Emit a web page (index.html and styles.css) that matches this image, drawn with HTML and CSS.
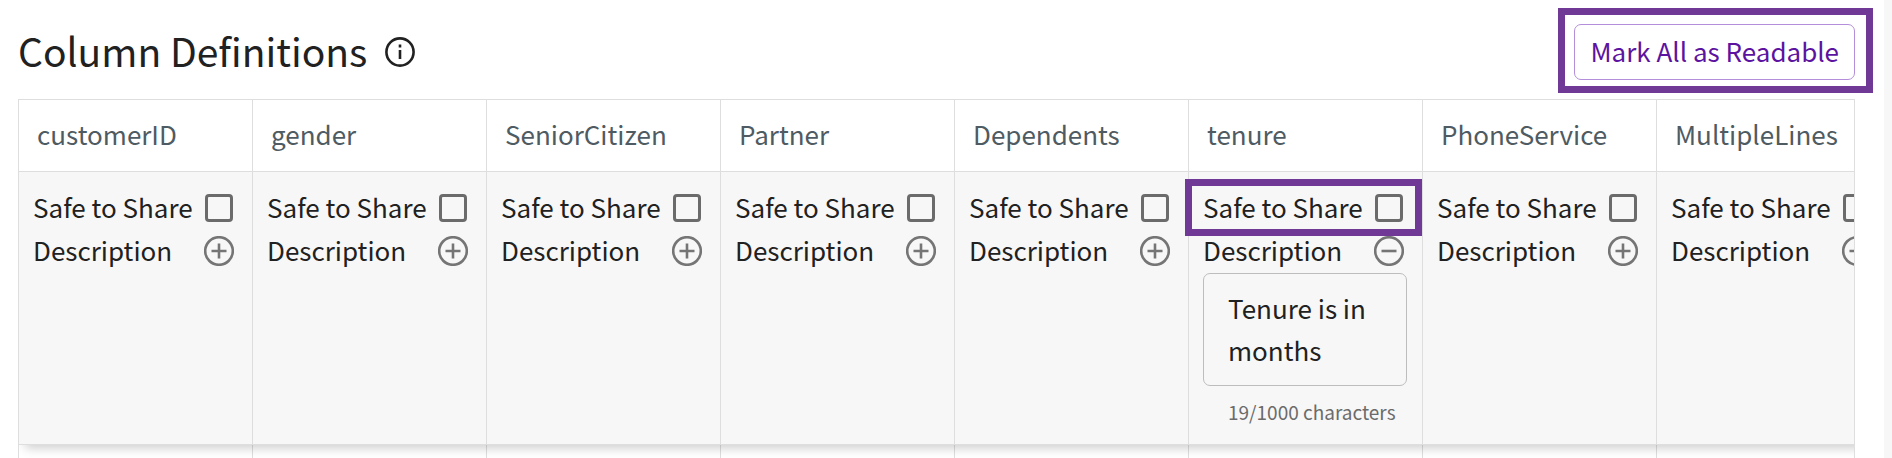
FILE: index.html
```html
<!DOCTYPE html>
<html lang="en">
<head>
    <meta charset="UTF-8">
    <meta name="viewport" content="width=device-width, initial-scale=1.0">
    <title>Column Definitions</title>
    <link rel="stylesheet" href="styles.css">
</head>
<body>
    <svg class="sprite" aria-hidden="true">
        <symbol id="icon-plus" viewBox="0 0 30 30">
            <circle cx="15" cy="15" r="13.8" />
            <path d="M15 7.5v15M7.5 15h15" />
        </symbol>
        <symbol id="icon-minus" viewBox="0 0 30 30">
            <circle cx="15" cy="15" r="13.8" />
            <path d="M7.5 15h15" />
        </symbol>
    </svg>

    <main class="page">
        <header class="toolbar">
            <h1>Column Definitions</h1>
            <button class="info" type="button" aria-label="About column definitions">
                <svg viewBox="0 0 30 30">
                    <circle cx="15" cy="15" r="13.6" />
                    <path d="M15 13v9M15 7.5v3" />
                </svg>
            </button>
            <div class="mark-all">
                <button class="mark-all-button" type="button">Mark All as Readable</button>
                <span class="highlight highlight-button"></span>
            </div>
        </header>

        <div class="table-scroll">
            <table>
                <thead>
                    <tr class="names">
                        <th>customerID</th>
                        <th>gender</th>
                        <th>SeniorCitizen</th>
                        <th>Partner</th>
                        <th>Dependents</th>
                        <th>tenure</th>
                        <th>PhoneService</th>
                        <th>MultipleLines</th>
                    </tr>
                    <tr class="settings">
                        <td>
                            <label class="row">Safe to Share <input type="checkbox"></label>
                            <div class="row">Description <button class="toggle" type="button" aria-label="Add description"><svg><use href="#icon-plus" /></svg></button></div>
                        </td>
                        <td>
                            <label class="row">Safe to Share <input type="checkbox"></label>
                            <div class="row">Description <button class="toggle" type="button" aria-label="Add description"><svg><use href="#icon-plus" /></svg></button></div>
                        </td>
                        <td>
                            <label class="row">Safe to Share <input type="checkbox"></label>
                            <div class="row">Description <button class="toggle" type="button" aria-label="Add description"><svg><use href="#icon-plus" /></svg></button></div>
                        </td>
                        <td>
                            <label class="row">Safe to Share <input type="checkbox"></label>
                            <div class="row">Description <button class="toggle" type="button" aria-label="Add description"><svg><use href="#icon-plus" /></svg></button></div>
                        </td>
                        <td>
                            <label class="row">Safe to Share <input type="checkbox"></label>
                            <div class="row">Description <button class="toggle" type="button" aria-label="Add description"><svg><use href="#icon-plus" /></svg></button></div>
                        </td>
                        <td>
                            <label class="row">Safe to Share <input type="checkbox"><span class="highlight highlight-row"></span></label>
                            <div class="row"><label for="tenure-description">Description</label> <button class="toggle" type="button" aria-label="Hide description"><svg><use href="#icon-minus" /></svg></button></div>
                            <textarea id="tenure-description" rows="2" maxlength="1000">Tenure is in months</textarea>
                            <div class="count">19/1000 characters</div>
                        </td>
                        <td>
                            <label class="row">Safe to Share <input type="checkbox"></label>
                            <div class="row">Description <button class="toggle" type="button" aria-label="Add description"><svg><use href="#icon-plus" /></svg></button></div>
                        </td>
                        <td>
                            <label class="row">Safe to Share <input type="checkbox"></label>
                            <div class="row">Description <button class="toggle" type="button" aria-label="Add description"><svg><use href="#icon-plus" /></svg></button></div>
                        </td>
                    </tr>
                </thead>
                <tbody>
                    <tr>
                        <td></td>
                        <td></td>
                        <td></td>
                        <td></td>
                        <td></td>
                        <td></td>
                        <td></td>
                        <td></td>
                    </tr>
                </tbody>
            </table>
        </div>
    </main>
</body>
</html>
```
FILE: styles.css
```css
* {
    box-sizing: border-box;
}
body {
    margin: 0;
    background-color: #f7f7f7;
    color: #212121;
    font-family: "Noto Sans CJK SC", "Noto Sans", sans-serif;
    font-size: 26px;
    line-height: 42px;
}
button,
textarea {
    font: inherit;
    color: inherit;
}
.sprite {
    display: none;
}
.page {
    height: 100vh;
    margin-right: 8px;
    padding: 0 29px 0 18px;
    background-color: white;
    overflow: hidden;
}

/* Title bar */
.toolbar {
    display: flex;
    align-items: center;
    padding: 24px 0 19px;
}
h1 {
    margin: 0;
    padding-bottom: 4px;
    font-size: 39px;
    font-weight: 400;
    line-height: 52px;
}
.info {
    display: flex;
    margin-left: 18px;
    padding: 0;
    border: none;
    background: none;
    cursor: pointer;
}
svg {
    width: 30px;
    height: 30px;
    fill: none;
    stroke: currentColor;
    stroke-width: 2.6;
}
.mark-all {
    position: relative;
    margin-left: auto;
}
.mark-all-button {
    display: block;
    height: 56px;
    padding: 0 15px 3px;
    border: 1px solid #b48edb;
    border-radius: 7px;
    background-color: white;
    color: #5c139f;
    cursor: pointer;
}

/* Purple callout frames */
.highlight {
    position: absolute;
    border: 7px solid #703996;
    pointer-events: none;
}
.highlight-button {
    inset: -16px -18px -13px -16px;
}
.highlight-row {
    inset: -8px -15px -6px -18px;
}

/* Table */
.table-scroll {
    border: 1px solid #dedede;
    border-bottom: none;
    overflow: auto hidden;
    scrollbar-width: none;
}
table {
    width: 1872px;
    table-layout: fixed;
    border-collapse: separate;
    border-spacing: 0;
}
thead {
    position: relative;
    z-index: 1;
    box-shadow: 6px 3px 10px rgba(0, 0, 0, 0.2);
}
th,
td {
    border-right: 1px solid #dedede;
    text-align: left;
    vertical-align: top;
}
th {
    height: 72px;
    padding: 0 18px 3px;
    border-bottom: 1px solid #dedede;
    background-color: white;
    color: #4f5b62;
    font-weight: 400;
    vertical-align: middle;
}
.settings td {
    height: 273px;
    padding: 15px 15px 0 14px;
    border-bottom: 1px solid #dedede;
    background-color: #f7f7f7;
}
tbody td {
    height: 60px;
}
.row {
    position: relative;
    display: flex;
    align-items: flex-start;
    justify-content: space-between;
    height: 43px;
    padding-right: 3px;
    line-height: 40px;
    white-space: nowrap;
}
input {
    appearance: none;
    width: 28px;
    height: 28px;
    margin: 7px 1px 0 0;
    border: 3px solid #6b6b6b;
    border-radius: 4px;
    cursor: pointer;
}
.toggle {
    display: flex;
    margin-top: 6px;
    padding: 0;
    border: none;
    background: none;
    color: #757575;
    cursor: pointer;
}
textarea {
    display: block;
    width: 100%;
    height: 113px;
    padding: 13px 24px;
    border: 1px solid #bdbdbd;
    border-radius: 7px;
    background: none;
    resize: none;
    overflow: hidden;
}
.count {
    padding: 8px 0 0 25px;
    color: #6b6b6b;
    font-size: 19px;
    line-height: 36px;
    white-space: nowrap;
}
```
